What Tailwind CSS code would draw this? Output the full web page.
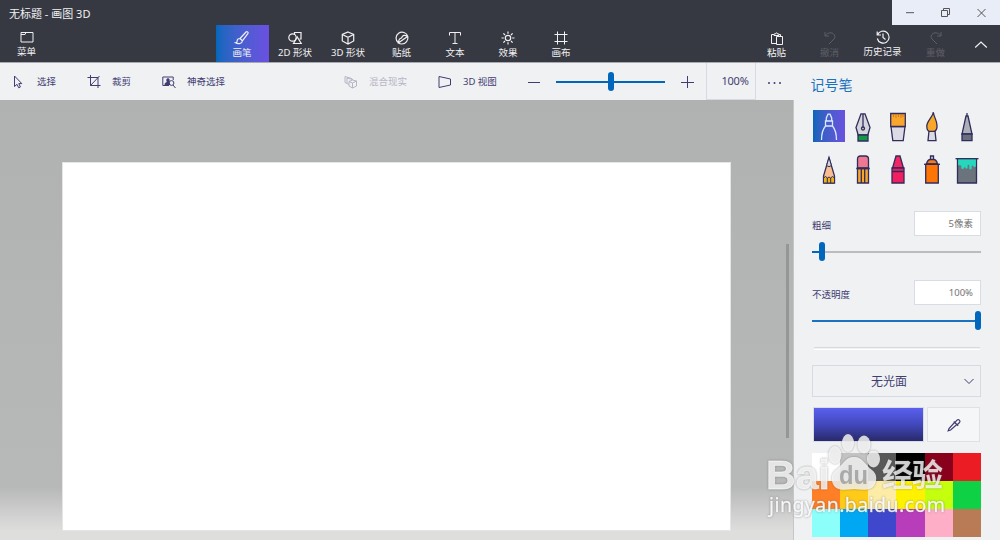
<!DOCTYPE html>
<html lang="zh-CN">
<head>
  <meta charset="UTF-8" />
  <meta name="viewport" content="width=device-width, initial-scale=1.0"/>
  <title>无标题 - 画图 3D</title>
  <script src="https://cdn.jsdelivr.net/npm/@tailwindcss/browser@4"></script>
</head>
<body class="relative w-[1000px] h-[540px] overflow-hidden bg-[#f0f1f3] font-['Noto_Sans','Noto_Sans_CJK_SC',sans-serif] text-[9.5px] text-[#413d72]">

  <header class="h-[62px] bg-[#373942] text-[#f1f1f3]">
    <!-- Title bar -->
    <div class="h-[25px] flex justify-between">
      <h1 class="pl-[9px] pt-[6px] text-[11px] leading-4">无标题 - 画图 3D</h1>
      <div class="w-[108px] h-[25px] bg-[#e9edf8] text-[#555]">
        <svg class="w-[108px] h-[25px]" viewBox="0 0 108 25" fill="none" stroke="currentColor">
          <path d="M14 12.7h8" />
          <path d="M49.5 10.5h6v6h-6zM51.5 10.5v-2h6v6h-2" />
          <path d="M85.5 9l8 8M93.5 9l-8 8" />
        </svg>
      </div>
    </div>

    <!-- Main menu -->
    <nav class="h-[37px] flex text-[9.5px] leading-3">
      <button class="w-[53px] pt-1 flex flex-col items-center">
        <svg class="w-4 h-4" viewBox="0 0 16 16" fill="none" stroke="currentColor"><path d="M2 3.500h12v9.500H2zM2 5.500h4l1-2" /></svg>
        <span class="mt-px">菜单</span>
      </button>
      <div class="ml-[162.5px] flex">
        <button class="w-[53px] pt-[5px] flex flex-col items-center bg-linear-to-r from-[#0067bd] to-[#6a50e2]">
          <svg class="w-4 h-4" viewBox="0 0 16 16" fill="none" stroke="currentColor" stroke-width="1.200"><path d="M6 8.500L12 2c1-1 2.700.2 1.800 1.600L8.400 10.800zM6 8.500c-1.800-.2-2.900 1-2.900 2.700 0 .8-.6 1.400-1.600 1.600 2.800 1.500 6.700 1 6.900-2z" /></svg>
          <span class="mt-px">画笔</span>
        </button>
        <button class="w-[53px] pt-[5px] flex flex-col items-center">
          <svg class="w-4 h-4" viewBox="0 0 16 16" fill="none" stroke="currentColor" stroke-width="1.200"><path d="M7.500 4.500v-2h6.500v6.500h-1.500" /><circle cx="5.500" cy="7.500" r="3.700" /><path d="M10.300 7l3.900 6.500H6.500z" /></svg>
          <span class="mt-px">2D 形状</span>
        </button>
        <button class="w-[53px] pt-[5px] flex flex-col items-center">
          <svg class="w-4 h-4" viewBox="0 0 16 16" fill="none" stroke="currentColor" stroke-width="1.200"><path d="M8 2l5.700 2.500v6.500L8 14l-5.700-3V4.500zM2.300 4.500L8 7.300l5.700-2.800M8 7.300V14" /></svg>
          <span class="mt-px">3D 形状</span>
        </button>
        <button class="w-[54px] pt-[5px] flex flex-col items-center">
          <svg class="w-4 h-4" viewBox="0 0 16 16" fill="none" stroke="currentColor" stroke-width="1.200"><path d="M13.800 6.500A6 6 0 1 0 4.500 13M4.500 13c0-3 .5-4.500 3-5C8.500 5 10.500 4.500 13.800 6.500c.8 3.500-2 7.500-6 7.500-1.400 0-2.300-.3-3.500-1L13.500 6.500" /></svg>
          <span class="mt-px">贴纸</span>
        </button>
        <button class="w-[53px] pt-[5px] flex flex-col items-center">
          <svg class="w-4 h-4" viewBox="0 0 16 16" fill="none" stroke="currentColor"><path d="M2.500 5.500v-3h11v3M8 2.500v11M5.500 13.500h5" /></svg>
          <span class="mt-px">文本</span>
        </button>
        <button class="w-[53px] pt-[5px] flex flex-col items-center">
          <svg class="w-4 h-4" viewBox="0 0 16 16" fill="none" stroke="currentColor" stroke-width="1.200"><circle cx="8" cy="8" r="2.700" /><path d="M8 1.500v2.300M8 12.200v2.300M1.500 8h2.300M12.200 8h2.300M3.400 3.400l1.600 1.600M11 11l1.600 1.600M3.400 12.600L5 11M11 5l1.600-1.600" /></svg>
          <span class="mt-px">效果</span>
        </button>
        <button class="w-[53px] pt-[5px] flex flex-col items-center">
          <svg class="w-4 h-4" viewBox="0 0 16 16" fill="none" stroke="currentColor"><path d="M4.500 1.500v13M11.500 1.500v13M1.500 4.500h13M1.500 11.500h13" /></svg>
          <span class="mt-px">画布</span>
        </button>
      </div>
      <div class="ml-[162.5px] flex">
        <button class="w-[53px] pt-[6px] flex flex-col items-center">
          <svg class="w-4 h-4" viewBox="0 0 16 16" fill="none" stroke="currentColor"><path d="M7.500 12.500h-5v-9h2.500M10 3.500h1.500v2M5 4.500v-1.500h1.500c0-1.500 2-1.500 2 0H10v1.500zM7.500 5.500h6v8h-6z" /></svg>
          <span>粘贴</span>
        </button>
        <button class="w-[53px] pt-[5px] flex flex-col items-center text-[#5d5f67]">
          <svg class="w-4 h-4" viewBox="0 0 16 16" fill="none" stroke="currentColor"><path d="M3 2v4h4M3 6c2-3 5.500-4 8-2.500 2.200 1.500 2.500 4 1 5.500l-5 5" /></svg>
          <span class="mt-px">撤消</span>
        </button>
        <button class="w-[53px] pt-1 flex flex-col items-center">
          <svg class="w-4 h-4" viewBox="0 0 16 16" fill="none" stroke="currentColor" stroke-width="1.200"><path d="M2.200 2.500V6H6M2.500 6a6 6 0 1 1-.2 3.500M8 4.500V8.500l2.500 2" /></svg>
          <span class="mt-px">历史记录</span>
        </button>
        <button class="w-[53px] pt-[5px] flex flex-col items-center text-[#5d5f67]">
          <svg class="w-4 h-4" viewBox="0 0 16 16" fill="none" stroke="currentColor"><path d="M13 2v4H9M13 6c-2-3-5.500-4-8-2.500C2.800 5 2.500 7.500 4 9l5 5" /></svg>
          <span class="mt-px">重做</span>
        </button>
      </div>
      <svg class="ml-[12px] mt-3 w-[14px] h-4" viewBox="0 0 14 16" fill="none" stroke="currentColor" stroke-width="1.200"><path d="M1.200 10.500L7 5l5.800 5.500" /></svg>
    </nav>
  </header>

  <div class="flex h-[478px] border-t border-[#a9aab0]">
    <main class="w-[794px] shrink-0 flex flex-col">
      <!-- Tool bar -->
      <div class="h-[37px] shrink-0 flex items-center">
        <button class="ml-[11px] w-[76px] flex items-center gap-3">
          <svg class="w-[14px] h-4" viewBox="0 0 14 16" fill="none" stroke="currentColor"><path d="M3.500 2v10.500L6 10.300l1.700 3.500 1.700-.8-1.600-3.400h3z" /></svg>
          <span class="pt-px">选择</span>
        </button>
        <button class="w-[75px] flex items-center gap-[11px]">
          <svg class="w-[14px] h-4" viewBox="0 0 14 16" fill="none" stroke="currentColor"><path d="M3.500 1v10.500h10M.5 3.500h10.500v10.500M3.500 11.500L12.500 2" /></svg>
          <span class="pt-px">裁剪</span>
        </button>
        <button class="w-[182px] flex items-center gap-[11px]">
          <svg class="w-[14px] h-4" viewBox="0 0 14 16" fill="none" stroke="currentColor"><path d="M7 11.500H.800v-8.500h10.400v3" /><path d="M2.500 11c0-2 1-2.500 2.300-3-1-1.500-.5-3.700 1.200-3.700S8.200 6.500 7.200 8L8.500 11z" fill="currentColor" stroke="none" /><circle cx="9.500" cy="9" r="2.400" /><path d="M11 11l2.500 3" /></svg>
          <span class="pt-px">神奇选择</span>
        </button>
        <button class="w-[94px] flex items-center gap-[11px] text-[#b5b5c5]">
          <svg class="w-[14px] h-4" viewBox="0 0 14 16" fill="none" stroke="currentColor"><path d="M5 10.500L1 8.500v-6l6.500 2v1M3 9V4l6 1.500M8.500 6l4 1v5l-4 2-3.500-2V7.500zM5 7.500l3.500 1.500 4-2M8.500 9v5" /></svg>
          <span class="pt-px">混合现实</span>
        </button>
        <button class="w-[90px] flex items-center gap-[11px]">
          <svg class="w-[14px] h-4" viewBox="0 0 14 16" fill="none" stroke="currentColor"><path d="M1 2.500l11.500 2.500v6L1 13.500z" /></svg>
          <span class="pt-px">3D 视图</span>
        </button>
        <svg class="w-3 h-3" viewBox="0 0 12 12" stroke="currentColor"><path d="M0 6.500h12" /></svg>
        <div class="ml-4 w-[109px] h-5 flex items-center justify-center">
          <div class="h-[2px] flex-1 bg-[#0067bd]"></div>
          <div class="w-[6px] h-[19px] rounded-full bg-[#0067bd]"></div>
          <div class="h-[2px] flex-1 bg-[#0067bd]"></div>
        </div>
        <svg class="ml-4 w-[13px] h-[13px]" viewBox="0 0 13 13" stroke="currentColor"><path d="M0 7.500h13M6.500 1v13" /></svg>
        <div class="ml-[12px] w-[50px] h-[37px] pl-2 flex items-center justify-center border-x border-b border-[#d6dae4] text-[11px] tracking-[-0.2px]">100%</div>
        <svg class="ml-3 w-[13px] h-3" viewBox="0 0 13 12" fill="currentColor"><circle cx="1" cy="7" r="1" /><circle cx="6.500" cy="7" r="1" /><circle cx="12" cy="7" r="1" /></svg>
      </div>

      <!-- Workspace -->
      <div class="h-[440px] flex border-r border-[#c4c6c7] bg-linear-to-b from-[#b0b2b1] from-0% via-[#b7b9b8] via-88% to-[#dededd] to-98%">
        <div class="ml-[62px] mt-[62px] w-[669px] h-[369px] bg-white border border-[#e4e5e5]"></div>
        <div class="ml-[55px] mt-36 w-[3px] h-[194px] bg-[#959796]"></div>
      </div>
    </main>

    <!-- Brush panel -->
    <aside class="flex-1 pl-[18px] pr-[19px]">
      <h2 class="-ml-[1.5px] pt-[12px] text-[14px] leading-5 text-[#1a73bf]">记号笔</h2>

      <div class="mt-[15px] ml-px w-[172px] grid grid-cols-5 gap-y-3">
        <div class="w-8 h-8 bg-linear-to-r from-[#0764ba] to-[#6852df]">
          <svg class="w-8 h-8" viewBox="0 0 32 32" fill="none" stroke="#dce8ff" stroke-width="1.300"><path d="M13.300 11V8L15 4.200h2L18.700 8v3M12.500 11h7v5h-7zM12.500 16C10 19 8.500 23 8.500 30M19.500 16c2.500 3 4 7 4 14" /></svg>
        </div>
        <svg class="w-8 h-8" viewBox="0 0 32 32" fill="none" stroke="#302c5c" stroke-width="1.300"><path d="M14 3.800h4L23 17.500 20.800 25h-9.600L9 17.500z" fill="#d3d4dc" /><path d="M16 4v13" /><circle cx="16" cy="18.500" r="1.500" /><path d="M11 25h10v6H11z" fill="#109a48" /></svg>
        <svg class="w-8 h-8" viewBox="0 0 32 32" stroke="#302c5c" stroke-width="1.300"><path d="M9 16.500L10.800 30.600h10.400L23 16.500z" fill="#dcdbe5" /><path d="M8.700 3.500h14.600v13H8.700z" fill="#f9a72b" /><path d="M11.500 4v3M14 4v4M16.500 4v3M19 4v4M21 4v3" stroke="#b96b25" stroke-width=".7" /></svg>
        <svg class="w-8 h-8" viewBox="0 0 32 32" stroke="#302c5c" stroke-width="1.300"><path d="M13 21l-1 9.600h8L19 21z" fill="#dcdbe5" /><path d="M17.300 2C17 7 10.500 11 10.800 16.500c.1 2.500 1.200 4.500 2.500 4.800h5.200c1.700-.8 2.700-3 2.500-6C20.800 10 18 7.500 17.300 2z" fill="#f9a72b" /></svg>
        <svg class="w-8 h-8" viewBox="0 0 32 32" stroke="#302c5c" stroke-width="1.300"><path d="M16 3v3M15 6h2l4 18H11z" fill="#adafb8" /><path d="M11 24h10v6.600H11z" fill="#696f7e" /></svg>

        <svg class="w-8 h-8" viewBox="0 0 32 32" stroke="#302c5c" stroke-width="1.300"><path d="M16 3.500L10.500 22v7h11v-7z" fill="#f8bd91" /><path d="M16 3.500l-2.400 8 2.400 1.200 2.400-1.200z" fill="#d5d4dd" stroke-width="1" /><path d="M10.500 24l2-1.500 2 1.500 1.500-1 1.500 1 2-1.500 2 1.500v5h-11zM14.300 24v5M17.700 24v5" fill="#efb01c" stroke-width="1" /></svg>
        <svg class="w-8 h-8" viewBox="0 0 32 32" stroke="#302c5c" stroke-width="1.300"><path d="M10.500 14V5q0-3 3-3h5q3 0 3 3v9z" fill="#ed7892" /><path d="M10.500 14.500h11V29h-11z" fill="#f8a62e" /><path d="M9.300 14.500h13.400M14.300 15v14M17.700 15v14" /></svg>
        <svg class="w-8 h-8" viewBox="0 0 32 32" stroke="#302c5c" stroke-width="1.300"><path d="M14 2h4L21.500 14H10.500z" fill="#f32565" /><path d="M10 14h12v15H10zM10 17.500h12" fill="#f21f60" /></svg>
        <svg class="w-8 h-8" viewBox="0 0 32 32" stroke="#302c5c" stroke-width="1.300"><path d="M14.500 2h3v4h-3z" fill="#d5d4dd" /><path d="M10.500 10q1-4.500 4-4.500h3q3 0 4 4.500z" fill="#f77b18" /><path d="M9.700 10.300h12.600V29H9.700z" fill="#fc7506" /><path d="M8 10.300h16" /></svg>
        <svg class="w-8 h-8" viewBox="0 0 32 32" stroke="#302c5c" stroke-width="1.300"><path d="M6.500 5h19v24h-19z" fill="#6b737c" /><path d="M7.100 5h17.800v7c-.4 1.500-2.400 1.500-2.600 0-.6-1-1.600-.6-1.600.6v2c-.5 1.400-2.200 1.200-2.400-.2v-3c-.6-1-1.700-.6-1.700.5v2c-.6 1.200-2 1-2.300-.4-.7-.8-1.500-.2-1.500.7-.6 1.400-2.400 1-2.500-.4v-2c-.7-1.300-2-.2-3.200-.8z" fill="#25d7bd" stroke="none" /><path d="M4.500 4.700h23" /></svg>
      </div>

      <div class="mt-[25px] w-[169px]">
        <div class="h-[25px] flex items-center justify-between">
          <label class="pt-[5px]">粗细</label>
          <div class="w-[67px] h-[25px] pr-[7px] pt-px flex items-center justify-end bg-white border border-[#d7dce5] text-[#737373]">5像素</div>
        </div>
        <div class="mt-[6px] h-[19px] flex items-center">
          <div class="w-[7px] h-[2px] bg-[#0067bd]"></div>
          <div class="w-[6px] h-[19px] rounded-full bg-[#0067bd]"></div>
          <div class="flex-1 h-[2px] bg-[#bcbcc0]"></div>
        </div>
      </div>

      <div class="mt-[19px] w-[169px]">
        <div class="h-[25px] flex items-center justify-between">
          <label class="pt-[5px]">不透明度</label>
          <div class="w-[67px] h-[25px] pr-[7px] pt-px flex items-center justify-end bg-white border border-[#d7dce5] text-[#737373]">100%</div>
        </div>
        <div class="mt-[6px] h-[19px] flex items-center">
          <div class="flex-1 h-[2px] bg-[#1a73bf]"></div>
          <div class="w-[6px] h-[19px] rounded-full bg-[#0067bd]"></div>
        </div>
      </div>

      <div class="mt-[17px] ml-[2px] w-[166px] h-[3px] border-t border-b border-t-[#d8dade] border-b-white"></div>

      <button class="mt-[15px] w-[169px] h-8 flex items-center border border-[#d6dae4]">
        <span class="w-[152px] pt-[2px] text-center text-[12px]">无光面</span>
        <svg class="-ml-px w-[10px] h-3 shrink-0" viewBox="0 0 10 12" fill="none" stroke="currentColor"><path d="M.5 4L5 8.500 9.500 4" /></svg>
      </button>

      <div class="mt-[10px] flex h-[35px] gap-[3px]">
        <div class="ml-px w-[111px] h-[35px] border border-[#d9dbe3] bg-linear-to-b from-[#5a60ee] via-[#4248bb] to-[#28296c]"></div>
        <button class="w-[53px] h-[35px] flex items-center justify-center border border-[#dfe1e5] bg-[#f5f6f8]">
          <svg class="w-4 h-4" viewBox="0 0 16 16" fill="none" stroke="currentColor" stroke-width="1.200"><path d="M9.200 5.200l1.800-2c1.500-1.500 4 .5 2.500 2.300l-2 2M7.800 4.500l4.400 4.300M8.500 5.500l-5.500 6-.800 2.300L4.600 13l6-5.200" /></svg>
        </button>
      </div>

      <!-- Palette -->
      <div class="mt-[11px] w-[169px] grid grid-cols-6 auto-rows-[28px]">
        <div class="bg-white"></div>
        <div class="bg-[#c3c3c3]"></div>
        <div class="bg-[#585858]"></div>
        <div class="bg-black"></div>
        <div class="bg-[#88001b]"></div>
        <div class="bg-[#ec1c24]"></div>
        <div class="bg-[#ff7f27]"></div>
        <div class="bg-[#ffca18]"></div>
        <div class="bg-[#fdeca6]"></div>
        <div class="bg-[#fff200]"></div>
        <div class="bg-[#c4ff0e]"></div>
        <div class="bg-[#0ed145]"></div>
        <div class="bg-[#8cfffb]"></div>
        <div class="bg-[#00a8f3]"></div>
        <div class="bg-[#3f48cc]"></div>
        <div class="bg-[#b83dba]"></div>
        <div class="bg-[#ffaec8]"></div>
        <div class="bg-[#b97a56]"></div>
      </div>
    </aside>
  </div>

  <!-- Watermark -->
  <svg class="absolute left-[760px] top-[430px] w-[200px] h-[100px] pointer-events-none drop-shadow-[0_0_1px_rgba(80,80,80,0.6)]" viewBox="0 0 200 100" fill="#fff" fill-opacity=".78">
    <text x="6" y="58.500" font-family="Liberation Sans" font-size="41" font-weight="700" stroke="#fff" stroke-opacity=".6" stroke-width=".8" textLength="64" lengthAdjust="spacingAndGlyphs">Bai</text>
    <ellipse cx="75" cy="25" rx="6.500" ry="9" />
    <ellipse cx="88" cy="13" rx="6" ry="9" />
    <ellipse cx="104" cy="14.500" rx="6.500" ry="9" />
    <ellipse cx="113.500" cy="29" rx="6.500" ry="8.500" />
    <path d="M94 27c-9 0-11 8-18 13-5 4-5 9-3 14 3 7 11 6 21 5 10 1 18 2 21-5 2-5 2-10-3-14-7-5-9-13-18-13z" />
    <text x="79" y="54" font-family="Liberation Sans" font-size="25" font-weight="700" fill="#999" textLength="29" lengthAdjust="spacingAndGlyphs">du</text>
    <text x="122" y="55.500" font-family="Noto Sans CJK SC" font-size="31" font-weight="700" textLength="61">经验</text>
    <text x="9" y="82" font-family="Noto Sans" font-size="19.500" textLength="176" fill-opacity=".9" stroke="#fff" stroke-opacity=".5" stroke-width=".4">jingyan.baidu.com</text>
  </svg>

</body>
</html>
